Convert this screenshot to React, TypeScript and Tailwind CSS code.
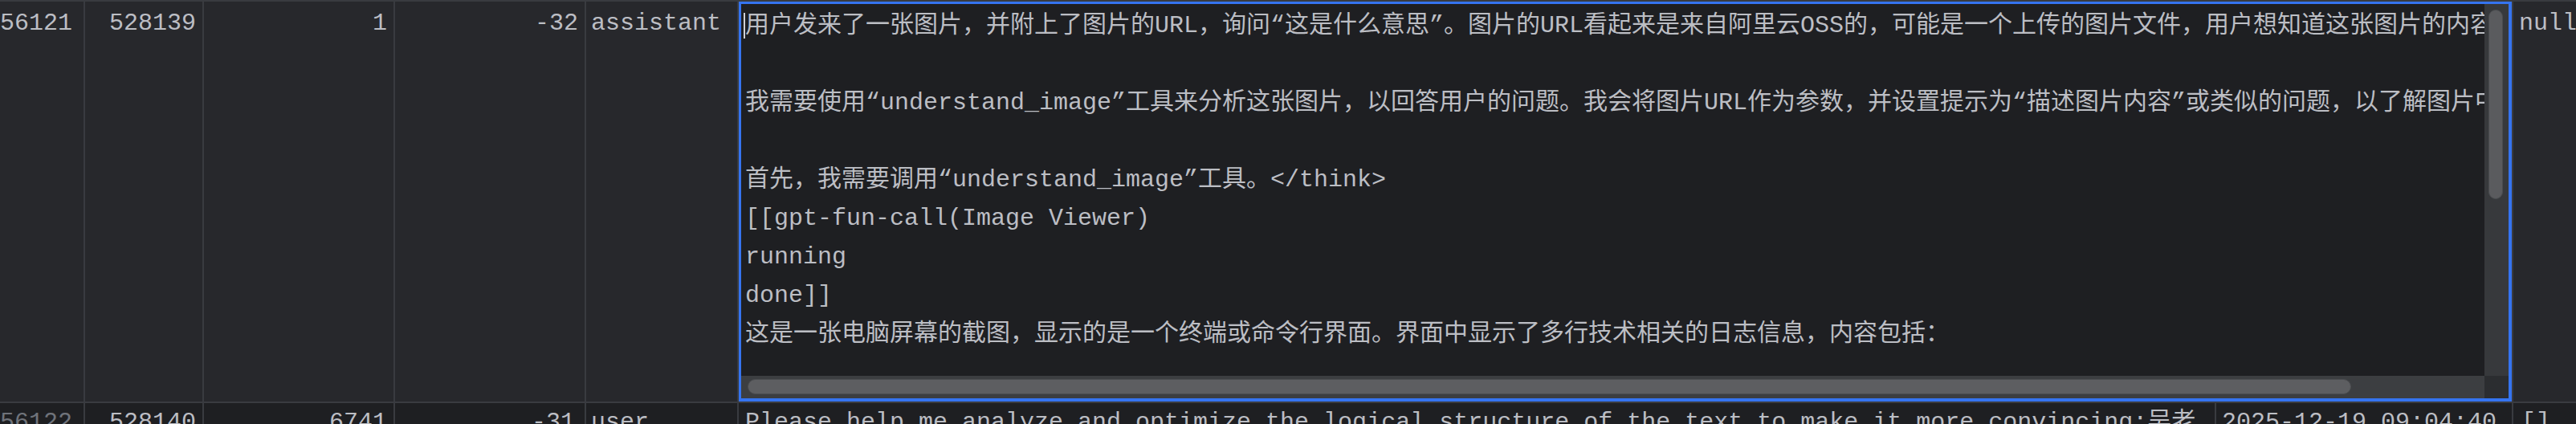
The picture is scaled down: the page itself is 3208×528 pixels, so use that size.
const cell = 'shrink-0 h-full overflow-hidden whitespace-nowrap border-r-2 border-[#393b40]';

const lines = [
  '用户发来了一张图片，并附上了图片的URL，询问“这是什么意思”。图片的URL看起来是来自阿里云OSS的，可能是一个上传的图片文件，用户想知道这张图片的内容。',
  '',
  '我需要使用“understand_image”工具来分析这张图片，以回答用户的问题。我会将图片URL作为参数，并设置提示为“描述图片内容”或类似的问题，以了解图片中的具体信息。',
  '',
  '首先，我需要调用“understand_image”工具。</think>',
  '[[gpt-fun-call(Image Viewer)',
  'running',
  'done]]',
  '这是一张电脑屏幕的截图，显示的是一个终端或命令行界面。界面中显示了多行技术相关的日志信息，内容包括：',
];

function Editor() {
  return (
    <div className="shrink-0 w-[2208px] h-full flex flex-col border-t-[3px] border-l-[3px] border-r-4 border-b-4 border-[#3574f0] bg-[#1e1f22]">
      <div className="flex-1 min-h-0 flex">
        <div className="flex-1 min-w-0 overflow-hidden pl-[5px] pt-[3px] whitespace-pre">
          {lines.map((line, i) => (
            <div key={i} className="h-[48px]">
              {i === 0 && (
                <span className="inline-block align-middle w-[2px] h-[32px] -ml-[2px] bg-[#ced0d6]" />
              )}
              {line || ' '}
            </div>
          ))}
        </div>
        {/* vertical scrollbar */}
        <div className="w-[30px] shrink-0 bg-[#37393c] pt-[7px] pl-[5px]">
          <div className="w-[18px] h-[236px] rounded-full bg-[#5a5b5e] border border-[#4a4c4f]" />
        </div>
      </div>
      {/* horizontal scrollbar */}
      <div className="h-[28px] shrink-0 flex">
        <div className="flex-1 bg-[#3c3e41] pl-[8px] pt-[4px]">
          <div className="w-[1997px] h-[19px] rounded-full bg-[#5d5e61] border border-[#4b4d50]" />
        </div>
        <div className="w-[30px] shrink-0 bg-[#2b2d30]" />
      </div>
    </div>
  );
}

export default function App() {
  return (
    <div className="w-[3208px] h-[528px] overflow-hidden bg-[#1e1f22] text-[#bcbec4] text-[30px] leading-[48px] font-['Liberation_Mono','Noto_Sans_CJK_SC',monospace]">
      {/* selected row */}
      <div className="flex h-[500px] border-t-2 border-[#393b40] bg-[#27282c]">
        <div className={`${cell} w-[106px] text-right pr-[15px] pt-[3px]`}>56121</div>
        <div className={`${cell} w-[148px] text-right pr-[8px] pt-[3px]`}>528139</div>
        <div className={`${cell} w-[238px] text-right pr-[8px] pt-[3px]`}>1</div>
        <div className={`${cell} w-[238px] text-right pr-[8px] pt-[3px]`}>-32</div>
        <div className={`${cell} w-[190px] pl-[6px] pt-[3px]`}>assistant</div>
        <Editor />
        <div className="flex-1 h-full border-l-2 border-[#393b40] pl-[7px] pt-[3px]">null</div>
      </div>

      {/* next row */}
      <div className="flex h-[28px] border-t-2 border-[#393b40] bg-[#1e1f22]">
        <div className={`${cell} w-[106px] text-right pr-[15px] text-[#6f737a]`}>56122</div>
        <div className={`${cell} w-[148px] text-right pr-[8px]`}>528140</div>
        <div className={`${cell} w-[238px] text-right pr-[8px]`}>6741</div>
        <div className={`${cell} w-[238px] text-right pr-[12px]`}>-31</div>
        <div className={`${cell} w-[190px] pl-[6px]`}>user</div>
        <div className={`${cell} w-[1840px] pl-[8px] pr-[20px]`}>
          Please help me analyze and optimize the logical structure of the text to make it more convincing:吴老
        </div>
        <div className={`${cell} w-[370px] pl-[7px]`}>2025-12-19 09:04:40</div>
        <div className="flex-1 h-full overflow-hidden whitespace-nowrap pl-[10px]">[]</div>
      </div>
    </div>
  );
}
